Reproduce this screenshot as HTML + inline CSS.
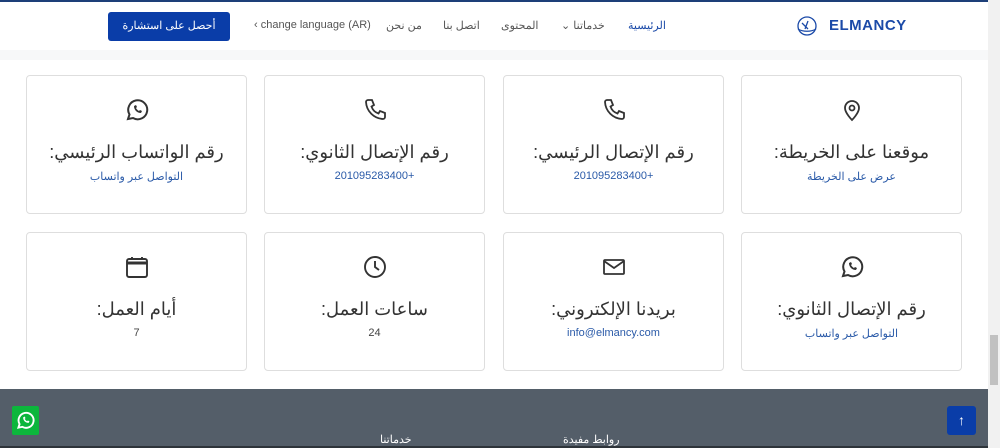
<!DOCTYPE html>
<html><head><meta charset="utf-8"><style>
*{box-sizing:border-box;margin:0;padding:0}
body{width:1000px;height:448px;overflow:hidden;background:#fff;font-family:"Liberation Sans","Noto Sans CJK SC",sans-serif;position:relative}
.top{position:absolute;top:0;left:0;width:988px;height:2px;background:#1d3f78}
.hdr{position:absolute;top:2px;left:0;width:988px;height:48px;background:#fff}
.band{position:absolute;top:50px;left:0;width:988px;height:10px;background:#f7f8f9}
.nav{position:absolute;top:19px;font-size:11px;color:#555;white-space:nowrap}
.btn{position:absolute;left:108px;top:12px;width:122px;height:29px;background:#0a3da8;border-radius:3px;color:#fff;font-size:11px;text-align:center;line-height:29px}
.logo{position:absolute;left:829px;top:17px;font-weight:bold;color:#1b4aa8;font-size:15px;letter-spacing:.5px}
.card{position:absolute;width:221px;height:139px;border:1px solid #dedede;border-radius:4px;background:#fff;text-align:center}
.card svg{position:absolute;left:98px;top:22px}
.t{position:absolute;top:66px;width:100%;font-size:18px;color:#333;direction:rtl}
.s{position:absolute;top:94px;width:100%;font-size:11px;color:#2a5aa8}
.s.g{color:#444}
.ft{position:absolute;top:389px;left:0;width:988px;height:59px;background:#545e69}
.sb{position:absolute;top:0;left:988px;width:12px;height:448px;background:#f1f1f1}
</style></head><body>
<div class="top"></div>
<div class="hdr"></div>
<div class="band"></div>
<div class="btn">أحصل على استشارة</div>
<div class="nav" style="left:254px">‹ change language (AR)</div>
<div class="nav" style="left:386px">من نحن</div>
<div class="nav" style="left:443px">اتصل بنا</div>
<div class="nav" style="left:501px">المحتوى</div>
<div class="nav" style="left:561px">⌄ خدماتنا</div>
<div class="nav" style="left:628px;color:#1b4aa8">الرئيسية</div>
<svg style="position:absolute;left:794px;top:15px" width="26" height="22" viewBox="0 0 26 22" fill="none" stroke="#1b4aa8" stroke-width="1.3"><circle cx="13" cy="11" r="9"/><path d="M4 14c5 3 13 3 18 0M8 8l6 6M14 6l-3 8"/></svg>
<div class="logo">ELMANCY</div>

<div class="card" style="left:741px;top:75px"><svg width="24" height="24" viewBox="0 0 24 24" fill="none" stroke="#333" stroke-width="1.8"><path d="M12 22s7-7 7-12a7 7 0 0 0-14 0c0 5 7 12 7 12z"/><circle cx="12" cy="10" r="2.5"/></svg><div class="t">موقعنا على الخريطة:</div><div class="s">عرض على الخريطة</div></div>
<div class="card" style="left:503px;top:75px"><svg width="24" height="24" viewBox="0 0 24 24" fill="none" stroke="#333" stroke-width="1.8"><path d="M5 2h4l2 5-2.5 1.5a11 11 0 0 0 7 7L17 13l5 2v4a2 2 0 0 1-2 2A18 18 0 0 1 3 4a2 2 0 0 1 2-2z"/></svg><div class="t">رقم الإتصال الرئيسي:</div><div class="s">&#x202D;201095283400+&#x202C;</div></div>
<div class="card" style="left:264px;top:75px"><svg width="24" height="24" viewBox="0 0 24 24" fill="none" stroke="#333" stroke-width="1.8"><path d="M5 2h4l2 5-2.5 1.5a11 11 0 0 0 7 7L17 13l5 2v4a2 2 0 0 1-2 2A18 18 0 0 1 3 4a2 2 0 0 1 2-2z"/></svg><div class="t">رقم الإتصال الثانوي:</div><div class="s">&#x202D;201095283400+&#x202C;</div></div>
<div class="card" style="left:26px;top:75px"><svg width="24" height="24" viewBox="0 0 24 24" fill="none" stroke="#333" stroke-width="2"><path d="M3 21l1.5-4.5A9.5 9.5 0 1 1 8 20z"/><path d="M9 8c0 4 3 7 7 7l1-2-2-1-1 1c-1-.5-2.5-2-3-3l1-1-1-2z" fill="#333" stroke="none"/></svg><div class="t">رقم الواتساب الرئيسي:</div><div class="s">التواصل عبر واتساب</div></div>

<div class="card" style="left:741px;top:232px"><svg width="24" height="24" viewBox="0 0 24 24" fill="none" stroke="#333" stroke-width="2"><path d="M3 21l1.5-4.5A9.5 9.5 0 1 1 8 20z"/><path d="M9 8c0 4 3 7 7 7l1-2-2-1-1 1c-1-.5-2.5-2-3-3l1-1-1-2z" fill="#333" stroke="none"/></svg><div class="t">رقم الإتصال الثانوي:</div><div class="s">التواصل عبر واتساب</div></div>
<div class="card" style="left:503px;top:232px"><svg width="24" height="24" viewBox="0 0 24 24" fill="none" stroke="#333" stroke-width="1.8"><rect x="2" y="5" width="20" height="14" rx="1"/><path d="M2 6l10 7 10-7"/></svg><div class="t">بريدنا الإلكتروني:</div><div class="s">info@elmancy.com</div></div>
<div class="card" style="left:264px;top:232px"><svg width="24" height="24" viewBox="0 0 24 24" fill="none" stroke="#333" stroke-width="1.9"><circle cx="12" cy="12" r="10"/><path d="M12 6v6l4 3"/></svg><div class="t">ساعات العمل:</div><div class="s g">24</div></div>
<div class="card" style="left:26px;top:232px"><svg width="24" height="24" viewBox="0 0 24 24" fill="none" stroke="#333" stroke-width="1.9"><rect x="2" y="4" width="20" height="18" rx="2"/><path d="M2 8h20" stroke-width="3"/><path d="M7 2v3M17 2v3"/></svg><div class="t">أيام العمل:</div><div class="s g">7</div></div>

<div class="ft">
<div style="position:absolute;left:12px;top:17px;width:27px;height:29px;background:#0cb63c;border-radius:2px"><svg style="position:absolute;left:4px;top:5px" width="19" height="19" viewBox="0 0 24 24" fill="none" stroke="#fff" stroke-width="2.4"><path d="M3 21l1.5-4.5A9.5 9.5 0 1 1 8 20z"/><path d="M9 8c0 4 3 7 7 7l1-2-2-1-1 1c-1-.5-2.5-2-3-3l1-1-1-2z" fill="#fff" stroke="none"/></svg></div>
<div style="position:absolute;left:947px;top:17px;width:29px;height:29px;background:#0a3da8;border-radius:3px;color:#fff;text-align:center;line-height:29px;font-size:14px">↑</div>
<div style="position:absolute;left:380px;top:44px;color:#fff;font-size:11px">خدماتنا</div>
<div style="position:absolute;left:563px;top:44px;color:#fff;font-size:11px">روابط مفيدة</div>
<div style="position:absolute;left:0;top:57px;width:988px;height:2px;background:#2e343a"></div>
</div>
<div class="sb"><div style="position:absolute;left:2px;top:335px;width:8px;height:50px;background:#c1c1c1"></div></div>
</body></html>
